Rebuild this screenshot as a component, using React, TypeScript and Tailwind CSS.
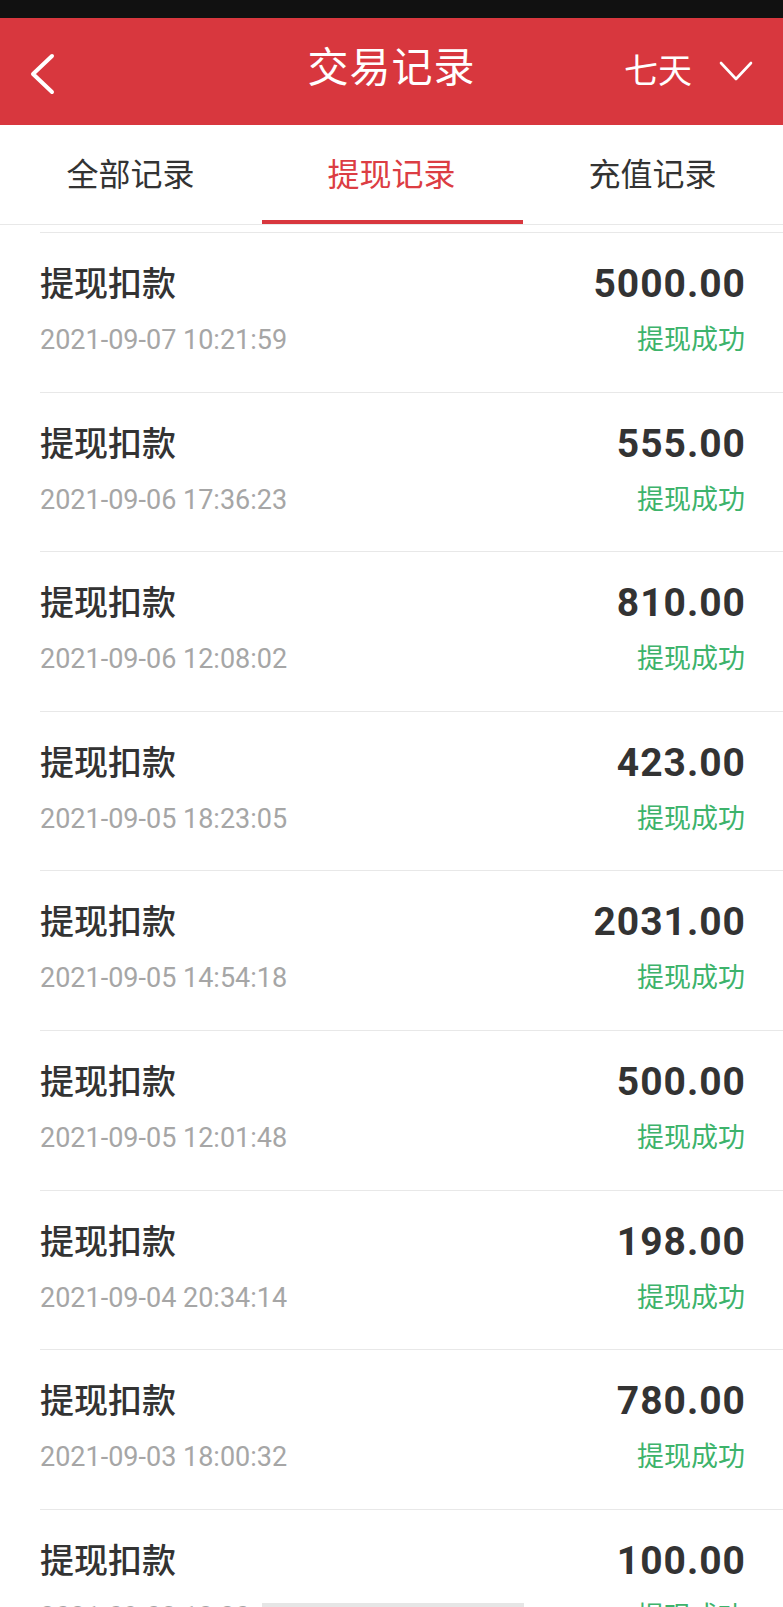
const rows = [
  { amount: '5000.00', time: '2021-09-07 10:21:59' },
  { amount: '555.00', time: '2021-09-06 17:36:23' },
  { amount: '810.00', time: '2021-09-06 12:08:02' },
  { amount: '423.00', time: '2021-09-05 18:23:05' },
  { amount: '2031.00', time: '2021-09-05 14:54:18' },
  { amount: '500.00', time: '2021-09-05 12:01:48' },
  { amount: '198.00', time: '2021-09-04 20:34:14' },
  { amount: '780.00', time: '2021-09-03 18:00:32' },
  { amount: '100.00', time: '2021-09-03 12:20:15' },
];

const tabs = ['全部记录', '提现记录', '充值记录'];

function Header() {
  return (
    <header className="h-[107.5px] bg-[#d8373e] flex items-center text-white">
      <div className="w-[160px] pl-[29px] flex items-center">
        <svg width="26" height="42" viewBox="0 0 26 42" className="mt-[6px]">
          <polyline points="23,3 4,21 23,39" fill="none" stroke="#fff" strokeWidth="4" strokeLinecap="round" strokeLinejoin="round" />
        </svg>
      </div>
      <h1 className="flex-1 text-center text-[41px] leading-none tracking-[1px] mb-[6px]">交易记录</h1>
      <div className="w-[160px] pr-[30px] flex items-center justify-end gap-[27px]">
        <span className="text-[34px] leading-none">七天</span>
        <svg width="34" height="20" viewBox="0 0 34 20">
          <polyline points="2,2 17,18 32,2" fill="none" stroke="#fff" strokeWidth="2.6" strokeLinecap="round" strokeLinejoin="round" />
        </svg>
      </div>
    </header>
  );
}

function Tabs() {
  return (
    <nav className="h-[100px] flex border-b border-[#e8e8e8]">
      {tabs.map((t, i) => (
        <div key={t} className="flex-1 relative flex items-center justify-center">
          <span className={i === 1 ? 'text-[32px] text-[#dc3d43]' : 'text-[32px] text-[#333]'}>{t}</span>
          {i === 1 && <div className="absolute bottom-0 left-[1px] right-[-1px] h-[4px] bg-[#d8373e]" />}
        </div>
      ))}
    </nav>
  );
}

function Row({ amount, time }: { amount: string; time: string }) {
  return (
    <li className="h-[159.6px] border-b border-[#e8e8e8] pt-[31px] pr-[38px] flex justify-between">
      <div className="flex flex-col gap-[20px]">
        <span className="text-[34px] leading-[40px] font-medium text-[#333]">提现扣款</span>
        <span className="text-[27px] leading-[32px] text-[#a6a6a6]">{time}</span>
      </div>
      <div className="flex flex-col items-end gap-[20px]">
        <span className="text-[39px] leading-[40px] font-bold text-[#333] tracking-[1px] mr-[-1px]">{amount}</span>
        <span className="text-[27px] leading-[32px] text-[#3db36b]">提现成功</span>
      </div>
    </li>
  );
}

export default function App() {
  return (
    <div className="w-[783px] h-[1607px] overflow-hidden relative bg-white font-['Roboto','Noto_Sans_CJK_SC',sans-serif]">
      <div className="h-[17.5px] bg-[#111]" />
      <Header />
      <Tabs />
      <div className="h-[7px]" />
      <ul className="ml-[40px] border-t border-[#e8e8e8]">
        {rows.map((r) => (
          <Row key={r.time} amount={r.amount} time={r.time} />
        ))}
      </ul>
      <div className="absolute left-[262px] bottom-0 w-[262px] h-[4px] bg-[#e6e6e6]" />
    </div>
  );
}
